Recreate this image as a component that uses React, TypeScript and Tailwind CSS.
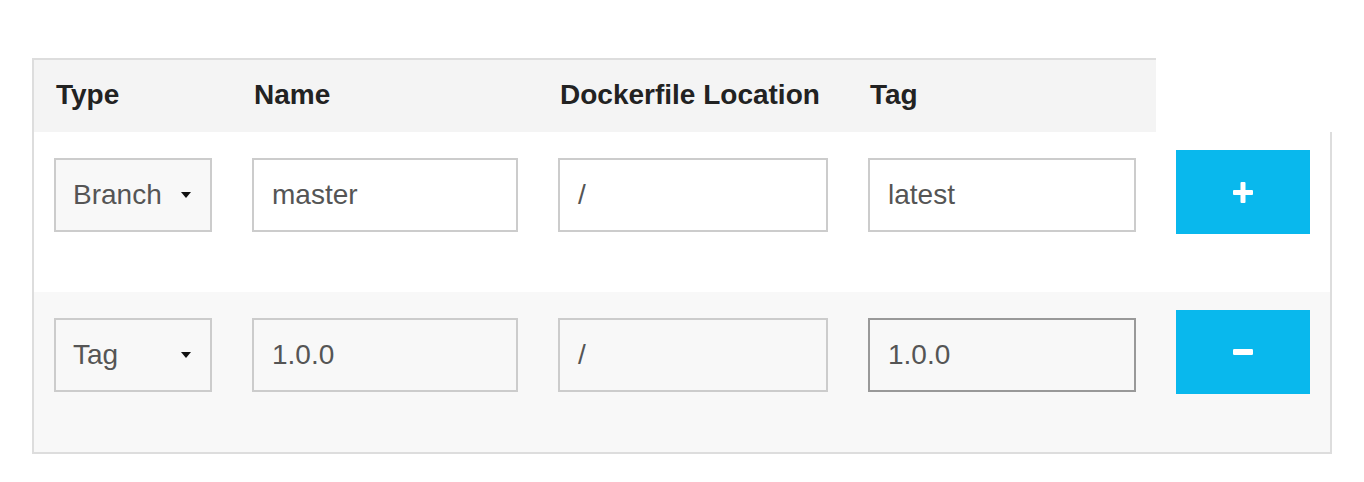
import React from "react";

const font = { fontFamily: '"Liberation Sans", Arial, Helvetica, sans-serif' };

function Caret() {
  return (
    <svg width="10" height="6" viewBox="0 0 10 6" className="shrink-0">
      <path d="M0 0 L10 0 L5 6 Z" fill="#111" />
    </svg>
  );
}

function SelectBox({ value }: { value: string }) {
  return (
    <div className="flex h-[74px] w-full items-center justify-between border-2 border-[#cccccc] bg-[#f8f8f8] pl-[17px] pr-[19px] text-[28px] text-[#555555]">
      <span>{value}</span>
      <Caret />
    </div>
  );
}

function TextBox({ value, bg, focused }: { value: string; bg: string; focused?: boolean }) {
  return (
    <div
      className={`flex h-[74px] w-full items-center border-2 pl-[18px] text-[28px] text-[#555555] ${
        focused ? "border-[#999999]" : "border-[#cccccc]"
      } ${bg}`}
    >
      {value}
    </div>
  );
}

function PlusIcon() {
  return (
    <svg width="20" height="21" viewBox="0 0 20 21">
      <rect x="7.5" y="0" width="5" height="21" rx="1" fill="#fff" />
      <rect x="0" y="8" width="20" height="5" rx="1" fill="#fff" />
    </svg>
  );
}

function MinusIcon() {
  return (
    <svg width="20" height="6" viewBox="0 0 20 6">
      <rect x="0" y="0" width="20" height="6" rx="1.2" fill="#fff" />
    </svg>
  );
}

const cols = "grid grid-cols-[198px_306px_310px_308px_174px]";

function Row({
  type,
  name,
  loc,
  tag,
  bg,
  inputBg,
  plus,
  focusTag,
}: {
  type: string;
  name: string;
  loc: string;
  tag: string;
  bg: string;
  inputBg: string;
  plus: boolean;
  focusTag?: boolean;
}) {
  return (
    <div className={`${cols} h-[160px] ${bg}`}>
      <div className="px-5 pt-[26px]">
        <SelectBox value={type} />
      </div>
      <div className="px-5 pt-[26px]">
        <TextBox value={name} bg={inputBg} />
      </div>
      <div className="px-5 pt-[26px]">
        <TextBox value={loc} bg={inputBg} />
      </div>
      <div className="px-5 pt-[26px]">
        <TextBox value={tag} bg={inputBg} focused={focusTag} />
      </div>
      <div className="px-5 pt-[18px]">
        <div className="flex h-[84px] w-[134px] items-center justify-center bg-[#09b8ed]">
          {plus ? <PlusIcon /> : <MinusIcon />}
        </div>
      </div>
    </div>
  );
}

export default function App() {
  return (
    <div className="min-h-[482px] bg-white pl-[32px] pt-[58px]" style={font}>
      <div className="w-[1300px]">
        <div className="w-[1124px] border-l-2 border-t-2 border-[#dddddd] bg-[#f4f4f4]">
          <div className="grid h-[72px] grid-cols-[198px_306px_310px_308px] items-center pb-[2px] text-[28px] font-bold text-[#222222]">
            <div className="pl-[22px]">Type</div>
            <div className="pl-[22px]">Name</div>
            <div className="pl-[22px]">Dockerfile Location</div>
            <div className="pl-[22px]">Tag</div>
          </div>
        </div>
        <div className="border-x-2 border-b-2 border-[#dddddd]">
          <Row type="Branch" name="master" loc="/" tag="latest" bg="bg-white" inputBg="bg-white" plus />
          <Row
            type="Tag"
            name="1.0.0"
            loc="/"
            tag="1.0.0"
            bg="bg-[#f8f8f8]"
            inputBg="bg-[#f8f8f8]"
            plus={false}
            focusTag
          />
        </div>
      </div>
    </div>
  );
}
